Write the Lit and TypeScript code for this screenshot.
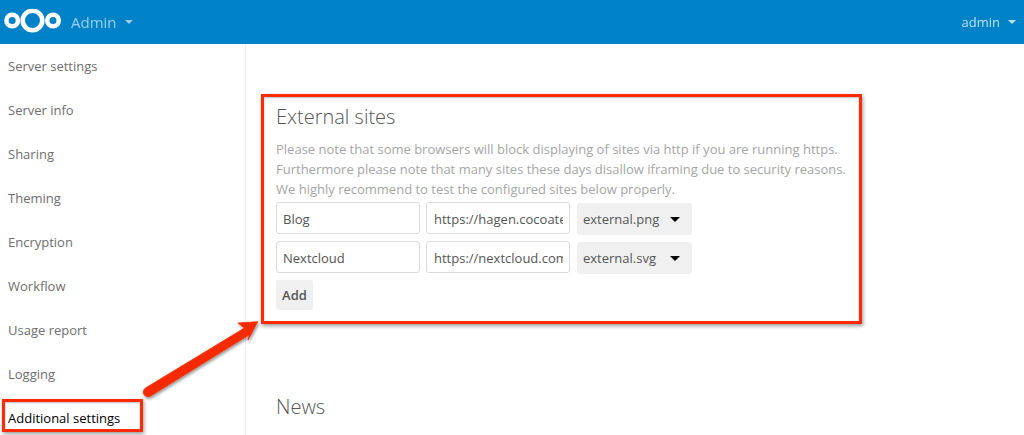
import { LitElement, html, css, svg } from "lit";
import { customElement } from "lit/decorators.js";

const NAV = ["Server settings", "Server info", "Sharing", "Theming", "Encryption", "Workflow", "Usage report", "Logging", "Additional settings"];
const SITES = [
  { name: "Blog", url: "https://hagen.cocoate.com", icon: "external.png" },
  { name: "Nextcloud", url: "https://nextcloud.com", icon: "external.svg" },
];

@customElement("app-root")
export class AppRoot extends LitElement {
  static styles = css`
    :host { display: block; position: relative; width: 1024px; height: 435px; overflow: hidden; background: #fff;
      font-family: "Open Sans", sans-serif; font-size: 13px; color: #555; }
    * { box-sizing: border-box; }
    header { height: 44px; background: #0082c9; display: flex; align-items: center; padding: 0 8px 0 4px; color: #fff; }
    .logo { width: 57px; height: 26px; display: block; }
    .app { margin-left: 10px; font-size: 15px; opacity: .6; display: flex; align-items: center; gap: 8px; }
    .spacer { flex: 1; }
    .user { font-size: 13px; opacity: .75; display: flex; align-items: center; gap: 8px; }
    .caret { width: 0; height: 0; border-left: 4px solid transparent; border-right: 4px solid transparent; border-top: 4px solid #fff; }
    .body { display: flex; height: 391px; }
    nav { width: 246px; flex: none; border-right: 1px solid #eee; }
    nav a { display: flex; align-items: center; height: 44px; padding-left: 8px; color: #6e6e6e; font-size: 13px; }
    nav a.active { color: #000; }
    main { padding: 59px 0 0 30px; flex: 1; }
    h2 { margin: 0; font-size: 20px; font-weight: 300; line-height: 28px; color: #555; }
    p { margin: 8px 0 0; line-height: 20px; color: #a5a5a5; font-size: 13px; white-space: nowrap; }
    .row { display: flex; gap: 6px; margin-top: 7px; height: 32px; }
    p + .row { margin-top: 3px; }
    .field { width: 144px; height: 32px; flex: none; border: 1px solid #dbdbdb; border-radius: 3px; padding: 1px 6px 0; display: flex; align-items: center; background: #fff; color: #555; overflow: hidden; white-space: nowrap; font-size: 13px; }
    .field.url { padding-left: 7px; }
    .field span { display: block; overflow: hidden; width: 100%; }
    .select { width: 115px; height: 32px; margin: 1px 0 0 1px; background: #f0f0f0; border-radius: 3px; padding: 0 6px; display: flex; align-items: center; justify-content: space-between; color: #555; font-size: 13px; }
    .select i { width: 0; height: 0; border-left: 5px solid transparent; border-right: 5px solid transparent; border-top: 5px solid #000; margin-right: 6px; }
    .add { margin-top: 7px; width: 37px; height: 30px; background: #f0f0f0; border-radius: 3px; display: flex; align-items: center; justify-content: center; font-weight: 600; font-size: 13px; color: #555; }
    h2.news { margin-top: 83px; }
    .mark { position: absolute; border: 3px solid #ff2a00; box-shadow: 1px 2px 4px rgba(0,0,0,.4), inset 0 1px 2px rgba(0,0,0,.25); pointer-events: none; }
    .mark.big { left: 261px; top: 94px; width: 601px; height: 230px; }
    .mark.small { left: 2px; top: 399px; width: 141px; height: 33px; }
    .arrow { position: absolute; left: 130px; top: 310px; width: 140px; height: 100px; overflow: visible; }
  `;

  render() {
    return html`
      <header>
        <svg class="logo" viewBox="0 0 57 26" aria-hidden="true">
          <g fill="none" stroke="#fff">
            <circle cx="8.2" cy="11.5" r="5.75" stroke-width="4.5"/>
            <circle cx="28.5" cy="11.5" r="9.8" stroke-width="4.6"/>
            <circle cx="49" cy="11.5" r="5.75" stroke-width="4.5"/>
          </g>
        </svg>
        <div class="app">Admin <span class="caret"></span></div>
        <div class="spacer"></div>
        <div class="user">admin <span class="caret"></span></div>
      </header>
      <div class="body">
        <nav>
          ${NAV.map((n, i) => html`<a class=${i === NAV.length - 1 ? "active" : ""}>${n}</a>`)}
        </nav>
        <main>
          <h2>External sites</h2>
          <p>Please note that some browsers will block displaying of sites via http if you are running https.<br>
          Furthermore please note that many sites these days disallow iframing due to security reasons.<br>
          We highly recommend to test the configured sites below properly.</p>
          ${SITES.map(s => html`
            <div class="row">
              <div class="field"><span>${s.name}</span></div>
              <div class="field url"><span>${s.url}</span></div>
              <div class="select">${s.icon}<i></i></div>
            </div>`)}
          <div class="add">Add</div>
          <h2 class="news">News</h2>
        </main>
      </div>
      <div class="mark big"></div>
      <div class="mark small"></div>
      <svg class="arrow" viewBox="0 0 140 100" aria-hidden="true">
        <defs>
          <filter id="s" x="-20%" y="-20%" width="140%" height="140%"><feDropShadow dx="1" dy="2" stdDeviation="1.5" flood-color="#000" flood-opacity=".4"/></filter>
        </defs>
        ${svg`<path filter="url(#s)" fill="#f52c00" stroke="#f52c00" stroke-width=".8" stroke-linejoin="round"
          d="M15.5 78 L114.5 18 L108 13 L127.7 11.7 L118 30 L119.6 24.5 L20.5 86 A4.7 4.7 0 0 1 15.5 78 Z"/>`}
      </svg>
    `;
  }
}
